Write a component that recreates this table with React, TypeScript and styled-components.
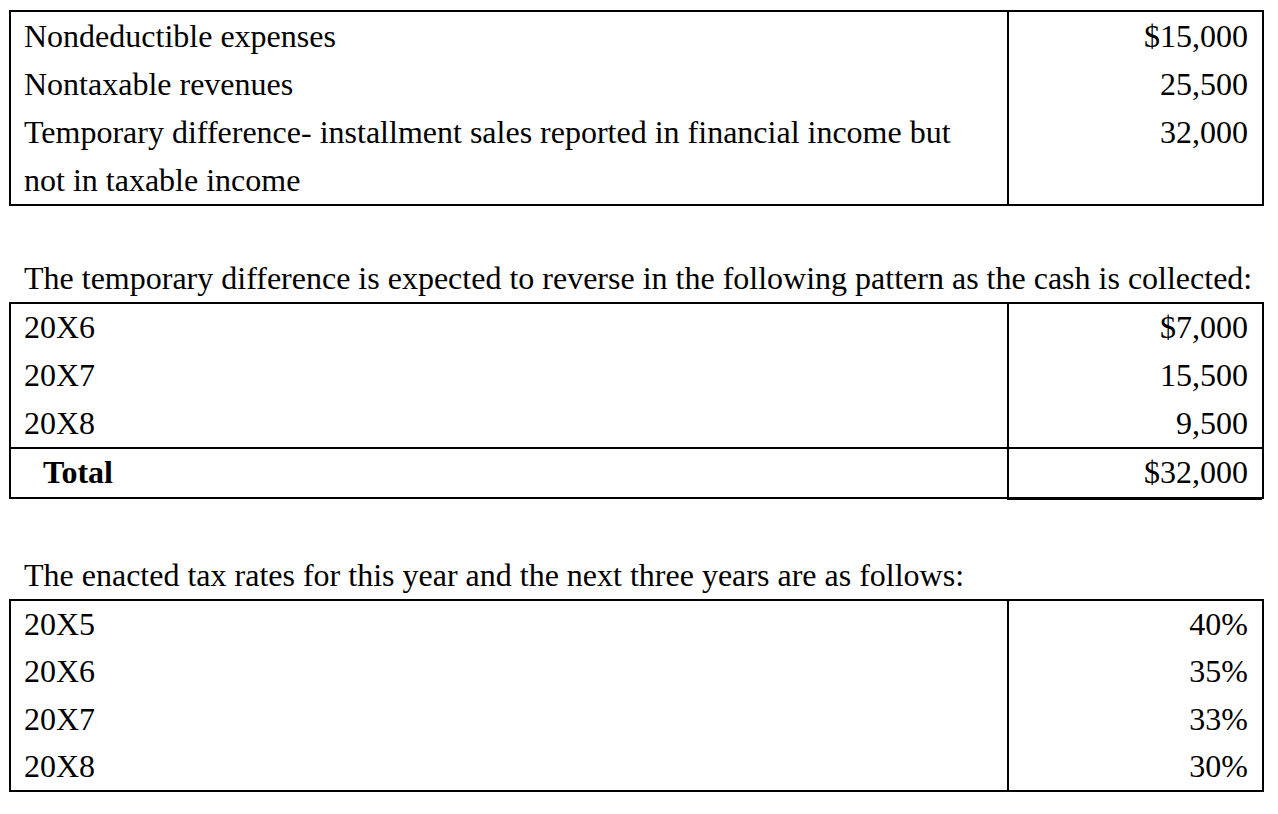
import React from 'react'
import styled, { createGlobalStyle } from 'styled-components'

const GlobalStyle = createGlobalStyle`
  body {
    margin: 0;
    background: #fff;
    color: #000;
    font-family: 'Liberation Serif', 'Times New Roman', serif;
  }
`

const Page = styled.div`
  padding: 10px 0 0 9px;
  width: 1255px;
`

const Grid = styled.div<{ $lh: number }>`
  display: grid;
  grid-template-columns: 996px 1fr;
  border: 2px solid #000;
  font-size: 32px;
  line-height: ${(p) => p.$lh}px;
`

const Cell = styled.div<{ $right?: boolean; $top?: boolean; $thick?: boolean }>`
  padding: ${(p) => (p.$right ? '0 14px 0 0' : '0 0 0 13px')};
  text-align: ${(p) => (p.$right ? 'right' : 'left')};
  border-left: ${(p) => (p.$right ? '2px solid #000' : 'none')};
  border-top: ${(p) => (p.$top ? '2px solid #000' : 'none')};
  ${(p) => p.$thick && 'box-shadow: 0 3px 0 #000;'}
`

const Line = styled.div<{ $bold?: boolean }>`
  font-weight: ${(p) => (p.$bold ? 700 : 400)};
  padding-left: ${(p) => (p.$bold ? '19px' : '0')};
`

const Intro = styled.p<{ $mt: number }>`
  margin: ${(p) => p.$mt}px 0 0 0;
  padding-left: 15px;
  font-size: 32px;
  line-height: 48px;
`

export default function App() {
  return (
    <Page>
      <GlobalStyle />
      <Grid $lh={48}>
        <Cell>
          <Line>Nondeductible expenses</Line>
          <Line>Nontaxable revenues</Line>
          <Line>Temporary difference- installment sales reported in financial income but</Line>
          <Line>not in taxable income</Line>
        </Cell>
        <Cell $right>
          <Line>$15,000</Line>
          <Line>25,500</Line>
          <Line>32,000</Line>
        </Cell>
      </Grid>

      <Intro $mt={48}>
        The temporary difference is expected to reverse in the following pattern as the cash is collected:
      </Intro>
      <Grid $lh={47.75}>
        <Cell>
          <Line>20X6</Line>
          <Line>20X7</Line>
          <Line>20X8</Line>
        </Cell>
        <Cell $right>
          <Line>$7,000</Line>
          <Line>15,500</Line>
          <Line>9,500</Line>
        </Cell>
        <Cell $top>
          <Line $bold>Total</Line>
        </Cell>
        <Cell $right $top $thick>
          <Line>$32,000</Line>
        </Cell>
      </Grid>

      <Intro $mt={52}>The enacted tax rates for this year and the next three years are as follows:</Intro>
      <Grid $lh={47.25}>
        <Cell>
          <Line>20X5</Line>
          <Line>20X6</Line>
          <Line>20X7</Line>
          <Line>20X8</Line>
        </Cell>
        <Cell $right>
          <Line>40%</Line>
          <Line>35%</Line>
          <Line>33%</Line>
          <Line>30%</Line>
        </Cell>
      </Grid>
    </Page>
  )
}
